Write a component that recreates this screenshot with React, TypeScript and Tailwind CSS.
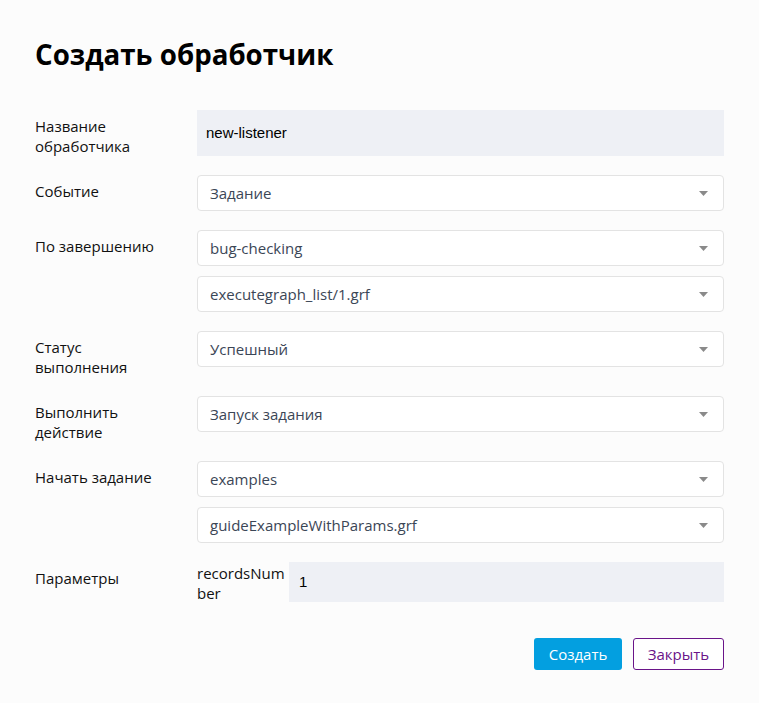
import React from "react";

const font = { fontFamily: '"Open Sans", "Noto Sans", sans-serif' };

function Caret() {
  return (
    <svg width="9" height="5" viewBox="0 0 9 5" className="shrink-0">
      <path d="M0 0 H9 L4.5 5 Z" fill="#8a8a8a" />
    </svg>
  );
}

function Select({ value }: { value: string }) {
  return (
    <div className="flex h-[36px] items-center justify-between rounded-[4px] border border-[#e3e3e3] bg-white pl-[12px] pr-[15px] text-[15px] text-[#3b4656]">
      <span>{value}</span>
      <Caret />
    </div>
  );
}

function Row({ label, children }: { label: string; children: React.ReactNode }) {
  return (
    <div className="flex">
      <div className="w-[162px] shrink-0 pr-[38px] pt-[6px] text-[15px] leading-[20px] text-[#111]">{label}</div>
      <div className="flex flex-1 flex-col gap-[10px]">{children}</div>
    </div>
  );
}

export default function App() {
  return (
    <div className="min-h-[703px] w-[759px] bg-[#fcfcfc] px-[35px] pt-[34px]" style={font}>
      <h1 className="text-[27.7px] font-bold leading-[40px] text-black">Создать обработчик</h1>
      <div className="mt-[36px] flex flex-col gap-[19px]">
        <Row label="Название обработчика">
          <div
            className="flex h-[46px] items-center bg-[#eef0f5] px-[9px] text-[15px] text-black"
            style={{ fontFamily: '"Liberation Sans", Arial, sans-serif' }}
          >
            new-listener
          </div>
        </Row>
        <Row label="Событие">
          <Select value="Задание" />
        </Row>
        <Row label="По завершению">
          <Select value="bug-checking" />
          <Select value="executegraph_list/1.grf" />
        </Row>
        <Row label="Статус выполнения">
          <Select value="Успешный" />
        </Row>
        <Row label="Выполнить действие">
          <Select value="Запуск задания" />
        </Row>
        <Row label="Начать задание">
          <Select value="examples" />
          <Select value="guideExampleWithParams.grf" />
        </Row>
        <Row label="Параметры">
          <div className="flex">
            <div className="w-[92px] shrink-0 pt-[1px] text-[15px] leading-[20px] text-[#111] break-all">recordsNumber</div>
            <div
              className="flex h-[40px] flex-1 items-center bg-[#eef0f5] px-[10px] text-[15px] text-black"
              style={{ fontFamily: '"Liberation Sans", Arial, sans-serif' }}
            >
              1
            </div>
          </div>
        </Row>
      </div>
      <div className="mt-[35px] flex justify-end gap-[11px]">
        <button className="h-[32px] w-[88px] rounded-[3px] bg-[#039fe0] text-[15px] text-white">Создать</button>
        <button className="h-[32px] w-[91px] rounded-[3px] border border-[#6a1489] bg-white text-[15px] text-[#6a1489]">Закрыть</button>
      </div>
    </div>
  );
}
